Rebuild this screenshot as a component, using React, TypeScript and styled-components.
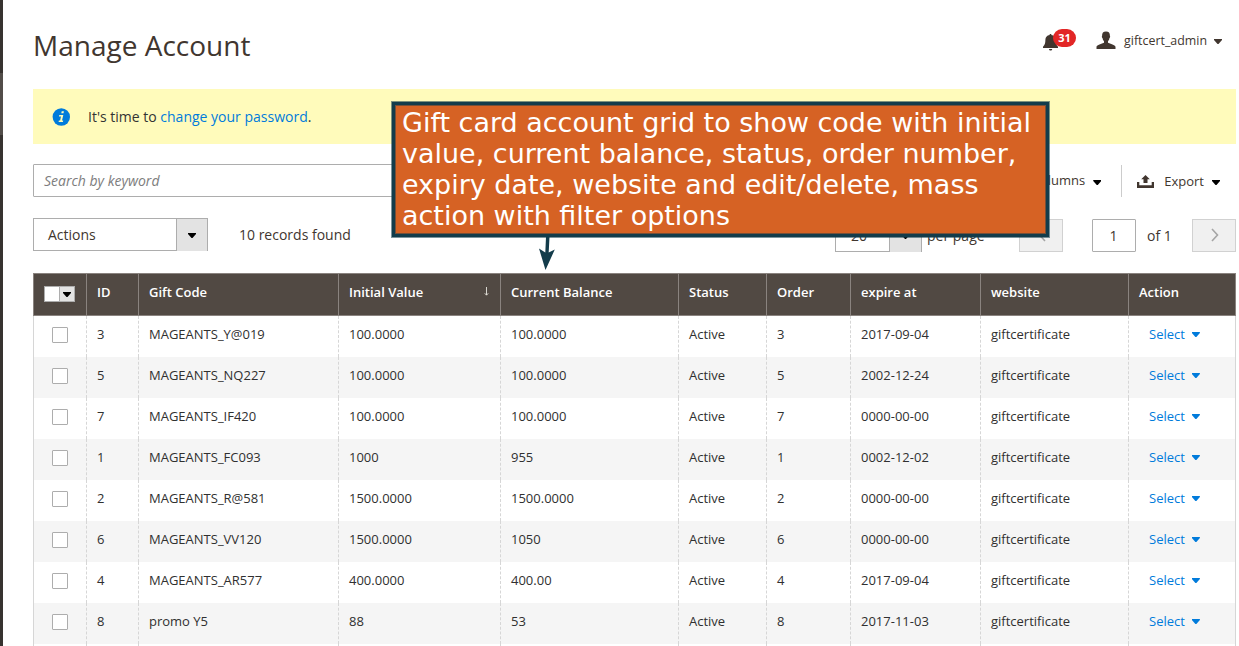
import React from 'react';
import styled, { createGlobalStyle, css } from 'styled-components';

const GlobalStyle = createGlobalStyle`
  * { box-sizing: border-box; }
  html, body { margin: 0; height: 646px; overflow: hidden; background: #fff; }
  body {
    font-family: 'Open Sans', sans-serif;
    font-size: 14px;
    line-height: 19px;
    color: #41362f;
  }
`;

const Page = styled.div`
  position: relative;
  display: flex;
  width: 1239px;
  height: 646px;
  overflow: hidden;
`;

const Sidebar = styled.div`
  flex: 0 0 3px;
  padding-top: 73px;
  background: #373330;
`;

const SidebarActive = styled.div`
  height: 62px;
  background: #524d49;
`;

const Main = styled.main`
  flex: 1;
  min-width: 0;
  padding: 0 3px 0 30px;
`;

const Header = styled.header`
  display: flex;
  justify-content: space-between;
  height: 89px;
`;

const Title = styled.h1`
  margin: 26px 0 0;
  font-size: 28px;
  line-height: 38px;
  font-weight: 400;
`;

const HeaderTools = styled.div`
  display: flex;
  align-items: flex-start;
  padding: 29px 14px 0 0;
`;

const Notifications = styled.div`
  display: flex;
  align-items: flex-start;
  width: 53px;
`;

const BellIcon = styled.svg`
  margin-top: 5px;
`;

const Badge = styled.span`
  width: 23px;
  height: 18px;
  margin-left: -5px;
  border-radius: 9px;
  background: #e22626;
  color: #fff;
  font-size: 11px;
  font-weight: 700;
  line-height: 18px;
  text-align: center;
  z-index: 1;
`;

const Account = styled.div`
  display: flex;
  font-size: 12.4px;
  line-height: 23px;
`;

const AccountIcon = styled.svg`
  margin: 2px 8px 0 0;
`;

const Caret = styled.i<{ $color?: string; $top?: number; $left?: number }>`
  flex: none;
  display: block;
  width: 8px;
  height: 5px;
  margin: ${(p) => p.$top ?? 0}px 0 0 ${(p) => p.$left ?? 0}px;
  background: ${(p) => p.$color ?? '#000'};
  clip-path: polygon(0 0, 100% 0, 100% 20%, 56% 100%, 44% 100%, 0 20%);
`;

const Message = styled.div`
  display: flex;
  align-items: center;
  height: 55px;
  padding: 0 0 0 19px;
  background: #fffbbb;
  color: #333;
`;

const InfoIcon = styled.svg`
  margin-right: 18px;
`;

const Link = styled.a`
  color: #007bdb;
`;

const Toolbar = styled.div`
  display: flex;
  justify-content: space-between;
  height: 33px;
  margin-top: 20px;
`;

const Search = styled.div`
  width: 430px;
  height: 33px;
  padding: 0 10px;
  border: 1px solid #adadad;
  border-radius: 1px;
  color: #7d7d7d;
  font-style: italic;
  line-height: 32px;
`;

const ToolbarActions = styled.div`
  display: flex;
  padding: 1px 16px 0 0;
  font-size: 13px;
`;

const ToolbarButton = styled.div<{ $divider?: boolean; $top: number }>`
  display: flex;
  height: 32px;
  padding-top: ${(p) => p.$top}px;
  ${(p) =>
    p.$divider &&
    css`
      margin-left: 20px;
      padding-left: 15px;
      border-left: 1px solid #ccc;
    `}
`;

const ExportIcon = styled.svg`
  margin: 3px 10px 0 0;
`;

const ToolbarLabel = styled.span`
  margin-right: 8px;
  line-height: 18px;
`;

const Controls = styled.div`
  display: flex;
  height: 76px;
  padding-top: 21px;
`;

const Select = styled.div<{ $width: number; $pad: number; $toggle: number }>`
  display: grid;
  grid-template-columns: 1fr ${(p) => p.$toggle}px;
  width: ${(p) => p.$width}px;
  height: 33px;
  border: 1px solid #adadad;
  line-height: 32px;

  & > span { padding-left: ${(p) => p.$pad}px; }
`;

const SelectToggle = styled.div`
  display: flex;
  align-items: center;
  justify-content: center;
  padding-top: 1px;
  border-left: 1px solid #adadad;
  background: #e3e3e3;
`;

const Records = styled.div`
  margin-left: 31px;
  line-height: 34px;
`;

const Pager = styled.div`
  display: flex;
  height: 34px;
  margin-left: auto;
  padding-top: 1px;
  line-height: 34px;
`;

const PerPage = styled.span`
  width: 97px;
  padding-left: 5px;
`;

const PageButton = styled.div`
  display: flex;
  align-items: center;
  justify-content: center;
  width: 44px;
  height: 33px;
  padding: 0 0 1px 2px;
  border: 1px solid #d1d1d1;
  background: #f0f0f0;
`;

const PageInput = styled.div`
  width: 44px;
  height: 33px;
  margin-left: 29px;
  padding-right: 1px;
  border: 1px solid #adadad;
  border-radius: 1px;
  line-height: 32px;
  text-align: center;
`;

const PageTotal = styled.span`
  width: 56px;
  padding-left: 11px;
`;

const Grid = styled.div`
  font-size: 13px;
`;

const columns = '53px 52px 200px 162px 178px 88px 84px 130px 148px 107px';

const HeadRow = styled.div`
  display: grid;
  grid-template-columns: ${columns};
  height: 43px;
  border-top: 1px solid #8a837f;
  border-bottom: 1px solid #8a837f;
  border-right: 1px solid #8a837f;
  background: #514943;
  color: #fff;
  font-weight: 600;
`;

const HeadCell = styled.div`
  display: flex;
  justify-content: space-between;
  padding: 9px 10px 0;
  border-left: 1px solid #8a837f;
  line-height: 18px;
`;

const SortArrow = styled.svg`
  margin: 4px 1px 0 0;
`;

const MassSelect = styled.div`
  display: grid;
  grid-template-columns: 14px 15px;
  width: 31px;
  height: 16px;
  margin-top: 3px;
  border: 1px solid #adadad;
  background: #fff;
`;

const MassToggle = styled.div`
  padding: 5px 0 0 3px;
  border-left: 1px solid #adadad;
  background: #e3e3e3;
`;

const Row = styled.div<{ $striped: boolean }>`
  display: grid;
  grid-template-columns: ${columns};
  height: 41px;
  border-right: 1px solid #d6d6d6;
  background: ${(p) => (p.$striped ? '#f5f5f5' : '#fff')};
  color: #303030;
`;

const Cell = styled.div`
  padding: 9px 10px 0;
  border-left: 1px dashed #d6d6d6;
  line-height: 18px;

  &:first-child {
    padding: 11px 0 0 18px;
    border-left-style: solid;
  }
`;

const Checkbox = styled.div`
  width: 16px;
  height: 16px;
  border: 1px solid #adadad;
  border-radius: 1px;
  background: #fff;
`;

const RowAction = styled.div`
  display: flex;
  gap: 7px;
  padding-left: 10px;
  color: #007bdb;
`;

const Callout = styled.div`
  position: absolute;
  left: 392px;
  top: 102px;
  width: 657px;
  height: 135px;
  padding: 2px 7px;
  border: 3px solid #133c4b;
  box-shadow: 0 0 0 1px rgba(19, 60, 75, 0.55), inset 0 0 0 1px rgba(19, 60, 75, 0.5);
  background: #d66224;
  color: #fff;
  font-family: 'DejaVu Sans', sans-serif;
  font-size: 26.98px;
  line-height: 31px;
  white-space: nowrap;
`;

const CalloutArrow = styled.svg`
  position: absolute;
  left: 536px;
  top: 237px;
`;

const headings = ['ID', 'Gift Code', 'Initial Value', 'Current Balance', 'Status', 'Order', 'expire at', 'website', 'Action'];

const rows = [
  ['3', 'MAGEANTS_Y@019', '100.0000', '100.0000', 'Active', '3', '2017-09-04'],
  ['5', 'MAGEANTS_NQ227', '100.0000', '100.0000', 'Active', '5', '2002-12-24'],
  ['7', 'MAGEANTS_IF420', '100.0000', '100.0000', 'Active', '7', '0000-00-00'],
  ['1', 'MAGEANTS_FC093', '1000', '955', 'Active', '1', '0002-12-02'],
  ['2', 'MAGEANTS_R@581', '1500.0000', '1500.0000', 'Active', '2', '0000-00-00'],
  ['6', 'MAGEANTS_VV120', '1500.0000', '1050', 'Active', '6', '0000-00-00'],
  ['4', 'MAGEANTS_AR577', '400.0000', '400.00', 'Active', '4', '2017-09-04'],
  ['8', 'promo Y5', '88', '53', 'Active', '8', '2017-11-03'],
  ['', '', '', '', '', '', ''],
];

const calloutLines = [
  'Gift card account grid to show code with initial',
  'value, current balance, status, order number,',
  'expiry date, website and edit/delete, mass',
  'action with filter options',
];

export default function App() {
  return (
    <Page>
      <GlobalStyle />
      <Sidebar>
        <SidebarActive />
      </Sidebar>
      <Main>
        <Header>
          <Title>Manage Account</Title>
          <HeaderTools>
            <Notifications>
              <BellIcon width="15" height="17" viewBox="0 0 15 17" fill="#41362f">
                <path d="M6.700 0h1.600v.9c3 .4 4.200 2.400 4.300 4.800.1 3.300.4 5.200 2.400 7V14H0v-1.300c2-1.800 2.300-3.700 2.400-7C2.500 3.300 3.700 1.300 6.700.9zM6 15h3.200c-.1 1-.7 1.500-1.600 1.500S6.100 16 6 15z" />
              </BellIcon>
              <Badge>31</Badge>
            </Notifications>
            <Account>
              <AccountIcon width="20" height="18" viewBox="0 0 20 18" fill="#41362f">
                <path d="M10 .6c2.800 0 4 1.500 3.900 4.200.5.600.2 2-.5 2.500-.2 1.300-.6 2.200-1.400 2.900v1.500c3.500 1.700 7.500 2 7.500 4.400V18H.5v-1.900c0-2.400 4-2.700 7.500-4.400v-1.500c-.8-.7-1.200-1.600-1.400-2.900-.7-.5-1-1.900-.5-2.500C6 2.100 7.200.6 10 .6z" />
              </AccountIcon>
              <span>giftcert_admin</span>
              <Caret $color="#41362f" $top={10} $left={7} />
            </Account>
          </HeaderTools>
        </Header>

        <Message>
          <InfoIcon width="18" height="18" viewBox="0 0 18 18">
            <circle cx="9.300" cy="9" r="8.700" fill="#007bdb" />
            <path d="M9.700 3.300h2.200l-.4 2H9.300zM7.300 7h4L10 12.500h1.200l-.3 1.500H6.600l.3-1.500h1.200l.9-4H7z" fill="#fffbbb" />
          </InfoIcon>
          <span>
            It's time to <Link>change your password</Link>.
          </span>
        </Message>

        <Toolbar>
          <Search>Search by keyword</Search>
          <ToolbarActions>
            <ToolbarButton $top={6}>
              <ToolbarLabel>Columns</ToolbarLabel>
              <Caret $top={9} />
            </ToolbarButton>
            <ToolbarButton $divider $top={7}>
              <ExportIcon width="17" height="13" viewBox="0 0 17 13" fill="#41362f">
                <path d="M8.500 0l4.300 4.300h-2.300V8h-4V4.300H4.200zM0 7h2.300v3.200h12.400V7H17v6H0z" />
              </ExportIcon>
              <ToolbarLabel>Export</ToolbarLabel>
              <Caret $top={8} />
            </ToolbarButton>
          </ToolbarActions>
        </Toolbar>

        <Controls>
          <Select $width={175} $pad={14} $toggle={31}>
            <span>Actions</span>
            <SelectToggle><Caret /></SelectToggle>
          </Select>
          <Records>10 records found</Records>
          <Pager>
            <Select $width={87} $pad={15} $toggle={32}>
              <span>20</span>
              <SelectToggle><Caret /></SelectToggle>
            </Select>
            <PerPage>per page</PerPage>
            <PageButton>
              <svg width="8" height="14" viewBox="0 0 8 14" fill="none" stroke="#a5a5a5" strokeWidth="1.600">
                <path d="M7 1L1.500 7 7 13" />
              </svg>
            </PageButton>
            <PageInput>1</PageInput>
            <PageTotal>of 1</PageTotal>
            <PageButton>
              <svg width="8" height="14" viewBox="0 0 8 14" fill="none" stroke="#a5a5a5" strokeWidth="1.600">
                <path d="M1 1l5.500 6L1 13" />
              </svg>
            </PageButton>
          </Pager>
        </Controls>

        <Grid>
          <HeadRow>
            <HeadCell>
              <MassSelect>
                <span />
                <MassToggle><Caret /></MassToggle>
              </MassSelect>
            </HeadCell>
            {headings.map((h) => (
              <HeadCell key={h}>
                {h}
                {h === 'Initial Value' && (
                  <SortArrow width="5" height="10" viewBox="0 0 5 10" fill="none" stroke="#e8e6df" strokeWidth="0.900">
                    <path d="M2.500 0v8M0.800 6.300l1.700 1.900 1.700-1.900" />
                  </SortArrow>
                )}
              </HeadCell>
            ))}
          </HeadRow>
          {rows.map((row, i) => (
            <Row key={i} $striped={i % 2 === 1}>
              <Cell>
                <Checkbox />
              </Cell>
              {row.map((value, j) => (
                <Cell key={j}>{value}</Cell>
              ))}
              <Cell>{row[0] && 'giftcertificate'}</Cell>
              <Cell>
                {row[0] && (
                  <RowAction>
                    Select
                    <Caret $color="#007bdb" $top={7} />
                  </RowAction>
                )}
              </Cell>
            </Row>
          ))}
        </Grid>
      </Main>

      <Callout>
        {calloutLines.map((line) => (
          <div key={line}>{line}</div>
        ))}
      </Callout>
      <CalloutArrow width="20" height="34" viewBox="0 0 20 34" fill="#133c4b">
        <path d="M10 0h3.500l-.8 15.500 6.100-3L9.500 33 3 11.500l6.300 4z" />
      </CalloutArrow>
    </Page>
  );
}
